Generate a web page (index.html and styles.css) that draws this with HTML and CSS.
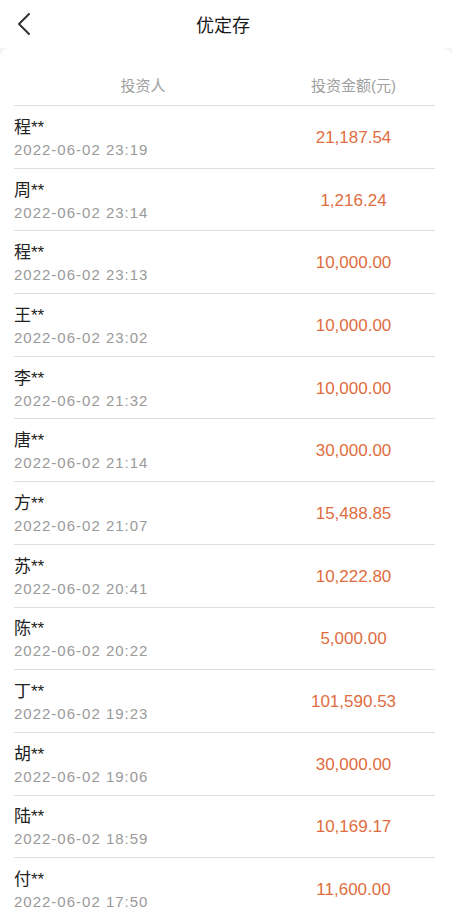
FILE: index.html
```html
<!DOCTYPE html>
<html lang="zh-CN">
<head>
  <meta charset="UTF-8" />
  <meta name="viewport" content="width=device-width, initial-scale=1.0" />
  <title>优定存</title>
  <link rel="stylesheet" href="styles.css">
</head>
<body>
  <div class="page">
    <header class="topbar">
      <a class="back" href="#">
        <svg width="14" height="24" viewBox="0 0 14 24"><path d="M12 2 L2 12 L12 22" fill="none" stroke="#333" stroke-width="2" stroke-linecap="round" stroke-linejoin="round"/></svg>
      </a>
      <h1>优定存</h1>
    </header>
    <main class="card">
      <div class="thead">
        <span>投资人</span>
        <span>投资金额(元)</span>
      </div>
      <div class="row"><div class="who"><p class="name">程**</p><p class="time">2022-06-02 23:19</p></div><div class="amount">21,187.54</div></div>
      <div class="row"><div class="who"><p class="name">周**</p><p class="time">2022-06-02 23:14</p></div><div class="amount">1,216.24</div></div>
      <div class="row"><div class="who"><p class="name">程**</p><p class="time">2022-06-02 23:13</p></div><div class="amount">10,000.00</div></div>
      <div class="row"><div class="who"><p class="name">王**</p><p class="time">2022-06-02 23:02</p></div><div class="amount">10,000.00</div></div>
      <div class="row"><div class="who"><p class="name">李**</p><p class="time">2022-06-02 21:32</p></div><div class="amount">10,000.00</div></div>
      <div class="row"><div class="who"><p class="name">唐**</p><p class="time">2022-06-02 21:14</p></div><div class="amount">30,000.00</div></div>
      <div class="row"><div class="who"><p class="name">方**</p><p class="time">2022-06-02 21:07</p></div><div class="amount">15,488.85</div></div>
      <div class="row"><div class="who"><p class="name">苏**</p><p class="time">2022-06-02 20:41</p></div><div class="amount">10,222.80</div></div>
      <div class="row"><div class="who"><p class="name">陈**</p><p class="time">2022-06-02 20:22</p></div><div class="amount">5,000.00</div></div>
      <div class="row"><div class="who"><p class="name">丁**</p><p class="time">2022-06-02 19:23</p></div><div class="amount">101,590.53</div></div>
      <div class="row"><div class="who"><p class="name">胡**</p><p class="time">2022-06-02 19:06</p></div><div class="amount">30,000.00</div></div>
      <div class="row"><div class="who"><p class="name">陆**</p><p class="time">2022-06-02 18:59</p></div><div class="amount">10,169.17</div></div>
      <div class="row"><div class="who"><p class="name">付**</p><p class="time">2022-06-02 17:50</p></div><div class="amount">11,600.00</div></div>
    </main>
  </div>
</body>
</html>
```

FILE: styles.css
```css
* { box-sizing: border-box; }
body {
  margin: 0;
  background: #fff;
  font-family: "Liberation Sans", "Noto Sans CJK SC", sans-serif;
  color: #222;
}
.page {
  width: 452px;
  background: #f4f4f4;
  height: 918px;
  overflow: hidden;
}
.topbar {
  height: 48px;
  background: #fff;
  display: flex;
  align-items: center;
  justify-content: center;
  position: relative;
  padding-right: 6px;
}
.topbar h1 {
  margin: 0;
  font-size: 18px;
  font-weight: normal;
  color: #1a1a1a;
}
.back {
  position: absolute;
  left: 17px;
  top: 12px;
  display: block;
  line-height: 0;
}
.card {
  background: #fff;
  border-radius: 9px 9px 0 0;
  padding: 0 17px 0 14px;
  min-height: 870px;
}
.thead {
  display: grid;
  grid-template-columns: 258px 1fr;
  height: 58px;
  padding-top: 27px;
  border-bottom: 1px solid #dedede;
  font-size: 15px;
  color: #a0a0a0;
  text-align: center;
  line-height: 22px;
}
.row {
  display: grid;
  grid-template-columns: 258px 1fr;
  align-items: center;
  height: 62.7px;
  border-bottom: 1px solid #dedede;
}
.who { padding-top: 4px; }
.who p { margin: 0; }
.name {
  font-size: 17px;
  line-height: 22px;
  color: #222;
}
.time {
  font-size: 15px;
  line-height: 22px;
  color: #9a9a9a;
  letter-spacing: 1px;
}
.amount {
  text-align: center;
  font-size: 17px;
  color: #e06d40;
  padding-top: 2px;
}
```
